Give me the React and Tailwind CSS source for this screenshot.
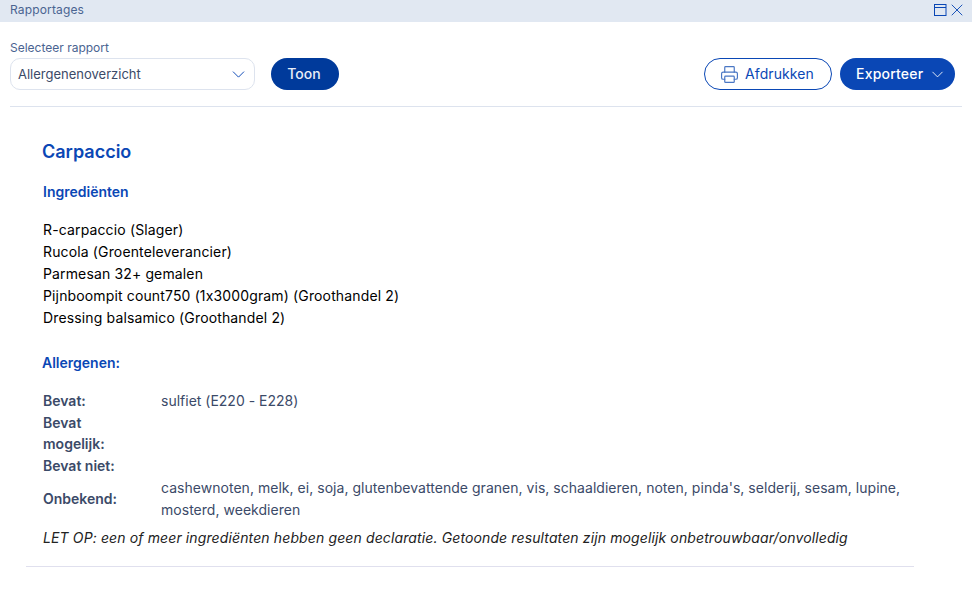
import React from "react";
import { ChevronDown, Printer, X } from "lucide-react";

const ingredients = [
  "R-carpaccio (Slager)",
  "Rucola (Groenteleverancier)",
  "Parmesan 32+ gemalen",
  "Pijnboompit count750 (1x3000gram) (Groothandel 2)",
  "Dressing balsamico (Groothandel 2)",
];

function App() {
  return (
    <div className="h-[590px] w-[972px] overflow-hidden bg-white font-['Inter',sans-serif] [font-feature-settings:'calt'_0]">
      <div className="flex h-[22px] items-center justify-between bg-[#e1e8f2] pl-[10px] pr-[5px]">
        <span className="-mt-[2px] text-xs tracking-[0.15px] text-[#4a6491]">Rapportages</span>
        <div className="-mt-[2px] flex items-center text-[#0a47b5]">
          <svg width="13" height="12" viewBox="0 0 13 12" fill="none" stroke="currentColor">
            <rect x="0.5" y="0.5" width="11.5" height="11" />
            <path d="M0.5 3.5H12" />
          </svg>
          <X size={20} strokeWidth={1.1} />
        </div>
      </div>

      <div className="mx-[10px] flex h-[85px] items-end justify-between border-b border-[#dde3ee] pb-[16px]">
        <div className="flex items-end">
          <div>
            <div className="mb-[3px] text-xs leading-[15px] text-[#4a6491]">Selecteer rapport</div>
            <div className="flex h-8 w-[245px] items-center justify-between rounded-[10px] border border-[#dde3ee] pl-[7px] pr-[5px]">
              <span className="mt-[1px] text-[13px] text-[#3b4a68]">Allergenenoverzicht</span>
              <ChevronDown size={21} strokeWidth={1.1} className="text-[#0a47b5]" />
            </div>
          </div>
          <button className="ml-4 h-8 w-[68px] rounded-full bg-[#003a9b] pr-[2px] text-sm font-medium text-[#e8eef8]">
            Toon
          </button>
        </div>
        <div className="mr-[7px] flex items-center gap-2">
          <button className="flex h-8 w-[128px] items-center justify-center gap-[6px] rounded-full border border-[#0a47b5] pr-[2px] text-sm tracking-[0.1px] text-[#0a47b5]">
            <Printer size={19} strokeWidth={1.5} className="text-[#4a77c4]" />
            Afdrukken
          </button>
          <button className="flex h-8 w-[115px] items-center gap-[5px] rounded-full bg-[#0a47b5] pl-4 text-sm font-medium tracking-[0.2px] text-white">
            Exporteer
            <ChevronDown size={19} strokeWidth={1.1} />
          </button>
        </div>
      </div>

      <div className="pl-[26px] pt-[34px]">
        <h1 className="pl-4 text-lg font-semibold leading-[22px] text-[#0a47b5]">Carpaccio</h1>
        <h2 className="mt-[19px] pl-[17px] text-sm font-semibold leading-[20px] text-[#0a47b5]">Ingrediënten</h2>
        <ul className="mt-[17px] pl-[17px] text-sm leading-[22px] tracking-[0.14px] text-black">
          {ingredients.map((item) => (
            <li key={item}>{item}</li>
          ))}
        </ul>
        <h2 className="mt-[24px] pl-4 text-sm font-semibold leading-[20px] text-[#0a47b5]">Allergenen:</h2>

        <div className="mt-[17px] w-[888px] pl-[17px] text-sm leading-[21.5px] text-[#3b4a68]">
          <div className="flex">
            <div className="w-[118px] shrink-0 font-semibold">Bevat:</div>
            <div>sulfiet (E220 - E228)</div>
          </div>
          <div className="flex">
            <div className="w-[80px] shrink-0 font-semibold">Bevat mogelijk:</div>
          </div>
          <div className="flex">
            <div className="w-[118px] shrink-0 font-semibold">Bevat niet:</div>
          </div>
          <div className="flex items-center pt-[1px]">
            <div className="w-[118px] shrink-0 font-semibold">Onbekend:</div>
            <div className="tracking-[0.03px]">
              cashewnoten, melk, ei, soja, glutenbevattende granen, vis, schaaldieren, noten, pinda's, selderij, sesam, lupine, mosterd, weekdieren
            </div>
          </div>
          <p className="mt-[7px] italic tracking-[0.12px] text-[#222]">
            LET OP: een of meer ingrediënten hebben geen declaratie. Getoonde resultaten zijn mogelijk onbetrouwbaar/onvolledig
          </p>
        </div>
        <div className="mt-[17px] w-[888px] border-b border-[#e0e0ee]" />
      </div>
    </div>
  );
}

export default App;
